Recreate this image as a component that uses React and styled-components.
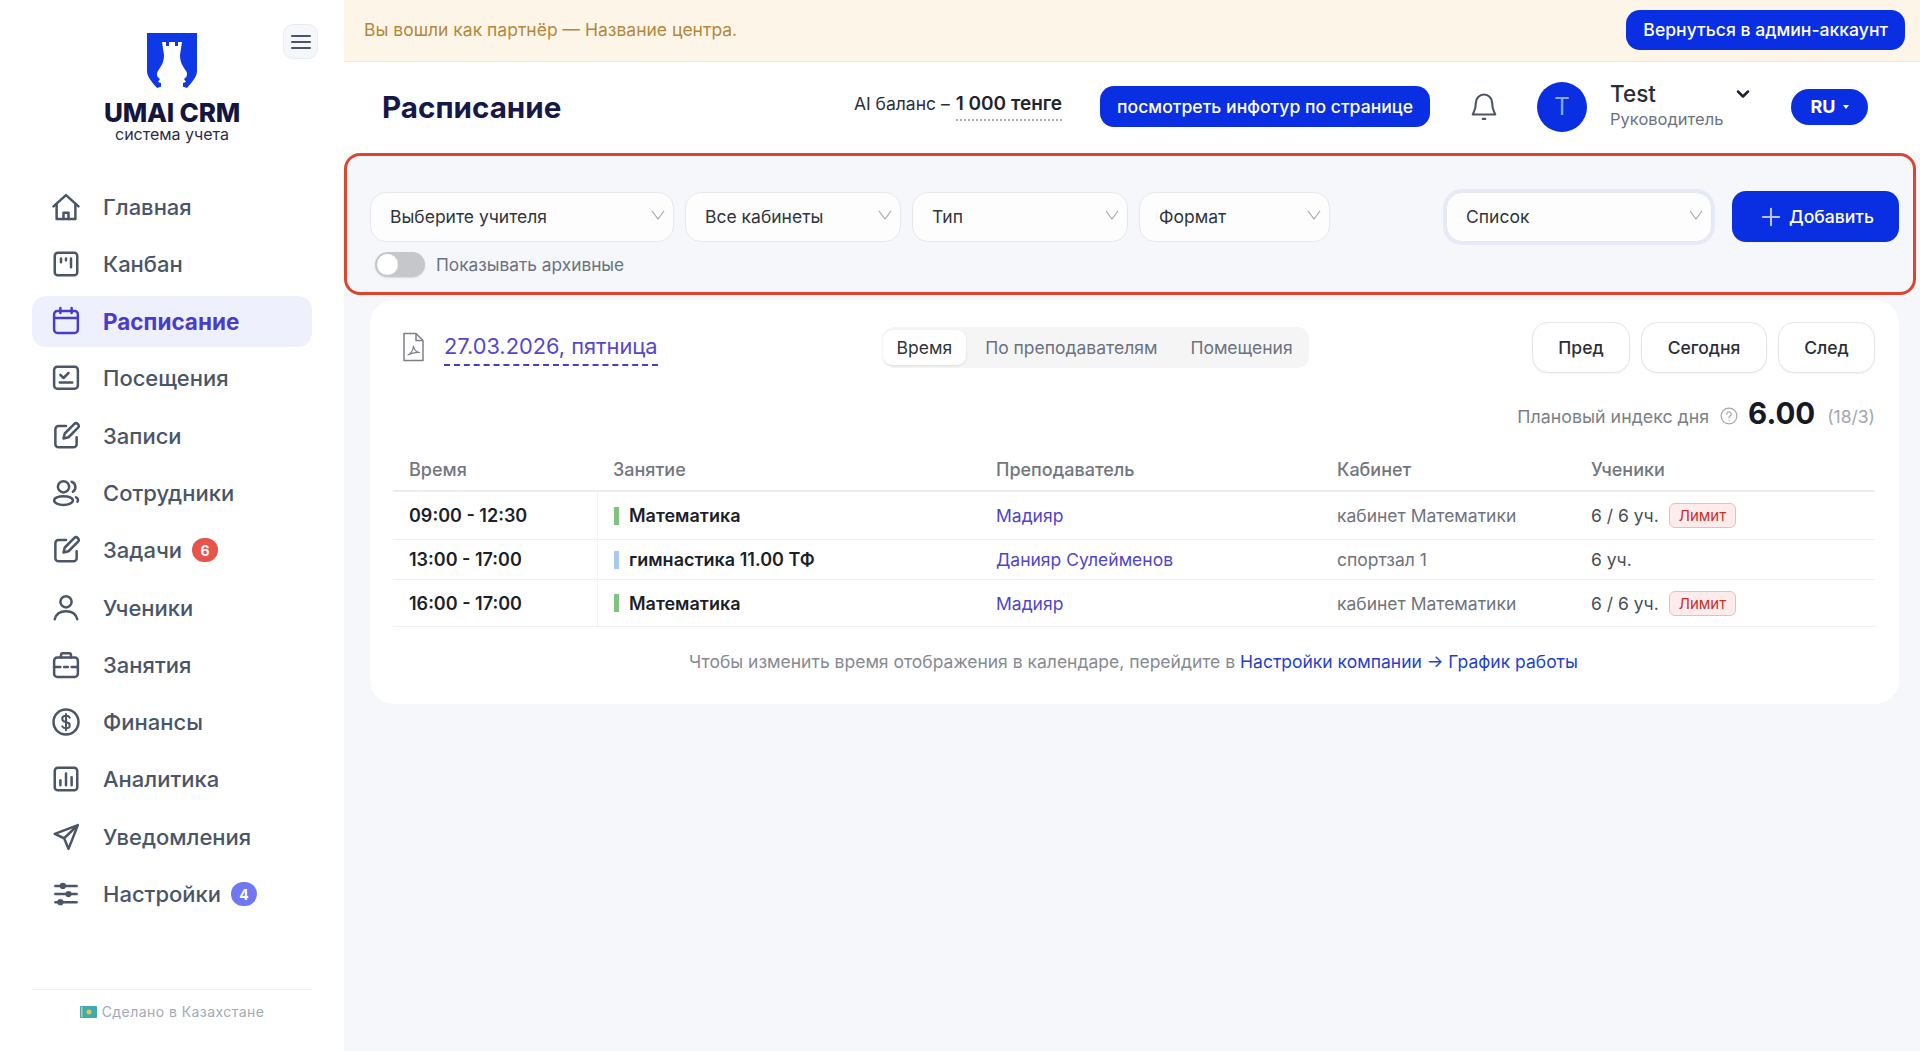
import React from "react";
import styled, { createGlobalStyle } from "styled-components";
import { ChevronDown, Plus } from "lucide-react";

const GlobalStyle = createGlobalStyle`
  * {
    box-sizing: border-box;
  }
  html,
  body {
    margin: 0;
    padding: 0;
    background: #f5f7fa;
    font-family: Inter, "Noto Sans", sans-serif;
  }
`;

const BLUE = "#0a2ee2";
const PURPLE = "#4a3cc8";

const Page = styled.div`
  display: flex;
  min-height: 100vh;
  height: 1051px;
  overflow: hidden;
`;

const Sidebar = styled.aside`
  position: relative;
  flex: 0 0 344px;
  display: flex;
  flex-direction: column;
  padding: 0 32px 0 32px;
  background: #fff;
`;

const LogoBlock = styled.div`
  display: flex;
  flex-direction: column;
  align-items: center;
  width: 280px;
  height: 181px;
  padding-top: 33px;
`;

const LogoName = styled.div`
  margin-top: 12px;
  font-size: 26px;
  line-height: 26px;
  font-weight: 800;
  letter-spacing: -0.2px;
  color: #14163f;
`;

const LogoSub = styled.div`
  font-size: 16px;
  line-height: 16px;
  color: #2b2d4a;
`;

const MenuButton = styled.button`
  position: absolute;
  top: 24px;
  left: 283px;
  display: flex;
  align-items: center;
  justify-content: center;
  width: 35px;
  height: 35px;
  padding: 0;
  border: 1px solid #e8ebf0;
  border-radius: 10px;
  background: #f6f7fa;
  color: #4a5568;
`;

const Nav = styled.nav`
  display: flex;
  flex-direction: column;
  gap: 6.3px;
`;

const NavItem = styled.div`
  display: flex;
  align-items: center;
  gap: 10px;
  height: 51px;
  padding-left: 19px;
  border-radius: 14px;
  font-size: ${(p) => (p.$active ? 22.5 : 22)}px;
  font-weight: ${(p) => (p.$active ? 700 : 500)};
  color: ${(p) => (p.$active ? PURPLE : "#4a5568")};
  background: ${(p) => (p.$active ? "#eef1fd" : "transparent")};

  svg {
    flex: none;
    margin-right: 12px;
  }
`;

const NavBadge = styled.span`
  display: flex;
  align-items: center;
  justify-content: center;
  width: 26px;
  height: 24px;
  border-radius: 12px;
  font-size: 14px;
  font-weight: 700;
  color: #fff;
  background: ${(p) => p.$color};
`;

const SideFooter = styled.div`
  display: flex;
  align-items: center;
  justify-content: center;
  gap: 5px;
  margin-top: auto;
  height: 62px;
  padding-bottom: 18px;
  border-top: 1px solid #eef0f3;
  font-size: 14px;
  letter-spacing: 0.45px;
  color: #a3a9b5;
`;

const Main = styled.main`
  flex: 1;
  min-width: 0;
  display: flex;
  flex-direction: column;
`;

const Banner = styled.div`
  display: flex;
  align-items: center;
  justify-content: space-between;
  height: 62px;
  padding: 0 15px 2px 20px;
  border-bottom: 1px solid #f7e9d2;
  background: #fdf6e8;
  font-size: 17.5px;
  color: #b5863c;
`;

const PrimaryButton = styled.button`
  height: ${(p) => p.$h}px;
  padding: 0 ${(p) => p.$px}px;
  border: none;
  border-radius: 14px;
  background: ${BLUE};
  color: #fff;
  font-family: inherit;
  font-size: 17.6px;
  font-weight: 500;
  white-space: nowrap;
`;

const Header = styled.header`
  display: flex;
  align-items: center;
  height: 91px;
  padding: 0 52px 2px 38px;
  background: #fff;
`;

const PageTitle = styled.h1`
  flex: 1;
  margin: 0;
  font-size: 29.6px;
  font-weight: 700;
  color: #17184a;
`;

const Balance = styled.div`
  display: flex;
  align-items: baseline;
  gap: 6px;
  margin-right: 38px;
  font-size: 17.5px;
  color: #2b2f3c;
`;

const BalanceValue = styled.span`
  padding-bottom: 4px;
  border-bottom: 2px dotted #a9adb6;
  font-size: 19px;
  font-weight: 600;
  color: #22242f;
`;

const BellWrap = styled.div`
  display: flex;
  margin: 0 38px 0 39px;
  color: #4a5568;
`;

const Avatar = styled.div`
  display: flex;
  align-items: center;
  justify-content: center;
  width: 50px;
  height: 50px;
  border-radius: 50%;
  background: ${BLUE};
  color: #8ea5f5;
  font-size: 24px;
`;

const UserInfo = styled.div`
  width: 123px;
  margin-left: 23px;
`;

const UserName = styled.div`
  margin-top: -5px;
  font-size: 22.5px;
  line-height: 28px;
  font-weight: 500;
  color: #2a2d37;
`;

const UserRole = styled.div`
  margin-top: 1px;
  font-size: 16.5px;
  line-height: 20px;
  color: #6b7280;
`;

const UserChevron = styled.div`
  display: flex;
  margin: -26px 38px 0 0;
  color: #1f2430;
`;

const LangButton = styled.div`
  display: flex;
  align-items: center;
  justify-content: center;
  gap: 7px;
  width: 77px;
  height: 36px;
  border-radius: 18px;
  background: ${BLUE};
  color: #fff;
  font-size: 18px;
  font-weight: 700;

  &::after {
    content: "";
    border-left: 3px solid transparent;
    border-right: 3px solid transparent;
    border-top: 4px solid #fff;
  }
`;

const FilterBar = styled.section`
  display: flex;
  flex-direction: column;
  gap: 10px;
  height: 142px;
  margin-right: 4px;
  padding: 35px 14px 0 23px;
  border: 3px solid #dc4630;
  border-radius: 16px;
`;

const FilterRow = styled.div`
  display: flex;
  align-items: center;
  gap: 11px;
`;

const SelectBox = styled.div`
  display: flex;
  align-items: center;
  justify-content: space-between;
  width: ${(p) => p.$w}px;
  height: 50px;
  padding: 0 6px 0 19px;
  border: 1px solid #e6e8ec;
  border-radius: 16px;
  background: #fdfdfd;
  box-shadow: ${(p) => (p.$focus ? "0 0 0 3px #e6e9f7" : "none")};
  font-size: 17.5px;
  color: #30343d;

  svg {
    color: #a9aeb6;
  }
`;

const Spacer = styled.div`
  flex: 1;
`;

const AddButton = styled.button`
  display: flex;
  align-items: center;
  justify-content: center;
  gap: 4px;
  width: 167px;
  height: 51px;
  margin-left: 9px;
  border: none;
  border-radius: 14px;
  background: ${BLUE};
  color: #fff;
  font-family: inherit;
  font-size: 17.6px;
  font-weight: 500;

  svg {
    color: #b7c3f8;
  }
`;

const ToggleRow = styled.div`
  display: flex;
  align-items: center;
  gap: 11px;
  padding-left: 5px;
  font-size: 17.3px;
  color: #6b7280;
`;

const Toggle = styled.div`
  display: flex;
  align-items: center;
  width: 50px;
  height: 25px;
  padding: 2px;
  border-radius: 13px;
  background: #c5c7cb;
  box-shadow: 0 1px 2px rgba(0, 0, 0, 0.12);

  &::before {
    content: "";
    width: 21px;
    height: 21px;
    border-radius: 50%;
    background: #fff;
  }
`;

const Card = styled.section`
  height: 404px;
  margin: 5px 21px 0 26px;
  padding: 22px 24px 0 23px;
  border-radius: 24px;
  background: #fff;
`;

const CardTop = styled.div`
  display: flex;
  align-items: center;
  height: 50px;
`;

const PdfWrap = styled.div`
  display: flex;
  margin: 0 19px 0 8px;
  color: #7d8087;
`;

const DateLink = styled.span`
  padding-bottom: 0;
  border-bottom: 2px dashed ${PURPLE};
  font-size: 21.8px;
  line-height: 36px;
  color: #5547cf;
`;

const Tabs = styled.div`
  display: flex;
  align-items: center;
  height: 41px;
  margin-left: 225px;
  padding: 0 16px 0 0;
  border-radius: 12px;
  background: #f5f5f6;
  font-size: 17.5px;
  color: #6b7280;
`;

const Tab = styled.div`
  display: flex;
  align-items: center;
  height: 35px;
  padding: 0 ${(p) => (p.$active ? 14 : 0)}px;
  margin-left: ${(p) => p.$ml}px;
  border-radius: 9px;
  background: ${(p) => (p.$active ? "#fff" : "transparent")};
  box-shadow: ${(p) => (p.$active ? "0 1px 3px rgba(0,0,0,.1)" : "none")};
  color: ${(p) => (p.$active ? "#2f323b" : "#6b7280")};
`;

const NavButtons = styled.div`
  display: flex;
  gap: 11px;
  margin-left: auto;
`;

const GhostButton = styled.button`
  width: ${(p) => p.$w}px;
  height: 51px;
  padding: 0;
  border: 1px solid #e3e5e9;
  border-radius: 16px;
  background: #fff;
  box-shadow: 0 1px 2px rgba(0, 0, 0, 0.05);
  color: #2b2e37;
  font-family: inherit;
  font-size: 17.5px;
  font-weight: 500;
`;

const IndexRow = styled.div`
  display: flex;
  align-items: center;
  justify-content: flex-end;
  height: 40px;
  margin-top: 24px;
  font-size: 17.8px;
  color: #7b7f88;

  svg {
    margin: 0 10px 0 11px;
    color: #a3a7ae;
  }
`;

const IndexValue = styled.span`
  margin: -6px 12px 0 0;
  font-size: 29.5px;
  font-weight: 700;
  color: #171a26;
`;

const IndexNote = styled.span`
  font-size: 17.5px;
  color: #a3a7ae;
`;

const Grid = styled.div`
  display: grid;
  grid-template-columns: 204px 383px 341px 254px 1fr;
  margin-top: 12px;
`;

const HeadCell = styled.div`
  display: flex;
  align-items: center;
  height: 44px;
  padding-left: 16px;
  border-bottom: 2px solid #ebedf0;
  font-size: 18px;
  font-weight: 500;
  color: #72767f;
`;

const Cell = styled.div`
  display: flex;
  align-items: center;
  height: ${(p) => p.$h}px;
  padding-left: 16px;
  border-bottom: 1px solid #eef0f2;
  border-left: ${(p) => (p.$divider ? "1px solid #f1f2f4" : "none")};
  font-size: ${(p) => (p.$strong ? 18 : 17.5)}px;
  font-weight: ${(p) => (p.$strong ? 600 : 400)};
  color: ${(p) => p.$color || "#6f737c"};
`;

const LessonBar = styled.span`
  width: 5px;
  height: 18px;
  margin-right: 10px;
  background: ${(p) => p.$color};
`;

const LimitTag = styled.span`
  display: flex;
  align-items: center;
  height: 25px;
  margin-left: 10px;
  padding: 0 9px;
  border: 1px solid #f5b8b4;
  border-radius: 6px;
  background: #fdeceb;
  font-size: 15px;
  color: #c9302c;
`;

const Hint = styled.div`
  margin-top: 24px;
  padding-right: 1px;
  text-align: center;
  font-size: 17.5px;
  color: #868a93;
`;

const HintLink = styled.span`
  color: #1f3fd1;
`;

function Icon({ children }) {
  return (
    <svg
      width="30"
      height="30"
      viewBox="0 0 24 24"
      fill="none"
      stroke="currentColor"
      strokeWidth="2"
      strokeLinecap="round"
      strokeLinejoin="round"
    >
      {children}
    </svg>
  );
}

const navItems = [
  {
    label: "Главная",
    icon: (
      <>
        <path d="M2 11.5 12 2.5l10 9" />
        <path d="M4.5 9.5V21.5h15V9.5" />
        <path d="M10 21.5v-5h4v5" />
      </>
    ),
  },
  {
    label: "Канбан",
    icon: (
      <>
        <rect x="3" y="3" width="18" height="18" rx="2.5" />
        <path d="M8 7.5v3M12 7.5v1.5M16 7.5v7" />
      </>
    ),
  },
  {
    label: "Расписание",
    active: true,
    icon: (
      <>
        <rect x="2.5" y="4" width="19" height="17.5" rx="2.5" />
        <path d="M2.5 9.5h19M7.5 1.5v4M16.5 1.5v4" />
      </>
    ),
  },
  {
    label: "Посещения",
    icon: (
      <>
        <rect x="2.5" y="3" width="19" height="17.5" rx="2.5" />
        <path d="m7.5 9.5 2.5 2.500 4-4M7 15.500h10" />
      </>
    ),
  },
  {
    label: "Записи",
    icon: (
      <>
        <path d="M12 4H6a2.5 2.5 0 0 0-2.5 2.5v12A2.5 2.5 0 0 0 6 21h12a2.5 2.5 0 0 0 2.5-2.5V13" />
        <path d="M18.5 2.5a2 2 0 0 1 3 3L14 13l-4 1 1-4z" />
      </>
    ),
  },
  {
    label: "Сотрудники",
    icon: (
      <>
        <circle cx="10" cy="7" r="4.5" />
        <ellipse cx="10" cy="18" rx="7.5" ry="3.5" />
        <path d="M16.5 3a4.5 4.5 0 0 1 1 8M20 15.5c1.5.7 2 2 1.2 3.5" />
      </>
    ),
  },
  {
    label: "Задачи",
    badge: { value: 6, color: "#e8534b" },
    icon: (
      <>
        <path d="M12 4H6a2.5 2.5 0 0 0-2.5 2.5v12A2.5 2.5 0 0 0 6 21h12a2.5 2.5 0 0 0 2.5-2.5V13" />
        <path d="M18.5 2.5a2 2 0 0 1 3 3L14 13l-4 1 1-4z" />
      </>
    ),
  },
  {
    label: "Ученики",
    icon: (
      <>
        <circle cx="12" cy="7" r="4.5" />
        <path d="M3 21c1-4.5 4.5-6.5 9-6.5s8 2 9 6.5" />
      </>
    ),
  },
  {
    label: "Занятия",
    icon: (
      <>
        <rect x="2.5" y="6" width="19" height="15.5" rx="2.5" />
        <path d="M8 6V4a1.5 1.5 0 0 1 1.5-1.5h5A1.5 1.5 0 0 1 16 4v2" />
        <path d="M2.5 13.5h5M10.5 13.5h3M16.5 13.5h5" />
      </>
    ),
  },
  {
    label: "Финансы",
    icon: (
      <>
        <circle cx="12" cy="12" r="10" />
        <path d="M15 8.500c-.5-1-1.600-1.500-3-1.500-1.800 0-3 1-3 2.500 0 3.400 6 1.600 6 5 0 1.500-1.200 2.500-3 2.500-1.400 0-2.500-.5-3-1.500M12 5.500v13" strokeWidth="1.600" />
      </>
    ),
  },
  {
    label: "Аналитика",
    icon: (
      <>
        <rect x="3" y="3" width="18" height="18" rx="2.5" />
        <path d="M7.500 17v-4M12 17V7.500M16.500 17v-6.500" />
      </>
    ),
  },
  {
    label: "Уведомления",
    icon: <path d="M21.500 2.500 3 9.500l7.500 3.500 3.500 8.500zM10.500 13l11-10.500" />,
  },
  {
    label: "Настройки",
    badge: { value: 4, color: "#7077f2" },
    icon: (
      <>
        <path d="M3.500 5.500h17M3.500 12h17M3.500 18.500h17" />
        <circle cx="9.500" cy="5.500" r="1.500" fill="currentColor" />
        <circle cx="14" cy="12" r="1.500" fill="currentColor" />
        <circle cx="7.500" cy="18.500" r="1.500" fill="currentColor" />
      </>
    ),
  },
];

const rows = [
  {
    time: "09:00 - 12:30",
    lesson: "Математика",
    bar: "#7fc37f",
    teacher: "Мадияр",
    room: "кабинет Математики",
    students: "6 / 6 уч.",
    limit: true,
    height: 48,
  },
  {
    time: "13:00 - 17:00",
    lesson: "гимнастика 11.00 ТФ",
    bar: "#a8c8f5",
    teacher: "Данияр Сулейменов",
    room: "спортзал 1",
    students: "6 уч.",
    height: 40,
  },
  {
    time: "16:00 - 17:00",
    lesson: "Математика",
    bar: "#7fc37f",
    teacher: "Мадияр",
    room: "кабинет Математики",
    students: "6 / 6 уч.",
    limit: true,
    height: 47,
  },
];

function LogoMark() {
  return (
    <svg width="50" height="55" viewBox="0 0 50 55">
      <path d="M0 0H50V38C50 44 45 49 40 55L25 50L10 55C5 49 0 44 0 38Z" fill="#0f39e6" />
      <path
        d="M15 9h4v4h3V9h6v4h3V9h4L33 22C33 30 36 33 39 38C41 41 40 44 37 46L39 49L36 50V55H14V50L11 49L13 46C10 44 9 41 11 38C14 33 17 30 17 22Z"
        fill="#fff"
      />
    </svg>
  );
}

function KzFlag() {
  return (
    <svg width="17" height="12" viewBox="0 0 17 12">
      <rect width="17" height="12" rx="1" fill="#3fa9b5" />
      <circle cx="9" cy="6" r="2.500" fill="#e5c94a" />
      <rect x="1" y="1" width="1.500" height="10" fill="#e5c94a" />
    </svg>
  );
}

function SelectChevron() {
  return (
    <svg width="18" height="18" viewBox="0 0 18 18" fill="none" stroke="currentColor" strokeWidth="1.300">
      <path d="M3 5l6 10 6-10" transform="translate(0 -1) scale(1 .8)" />
    </svg>
  );
}

export default function App() {
  return (
    <>
      <GlobalStyle />
      <Page>
        <Sidebar>
          <LogoBlock>
            <LogoMark />
            <LogoName>UMAI CRM</LogoName>
            <LogoSub>система учета</LogoSub>
          </LogoBlock>
          <MenuButton aria-label="menu">
            <svg width="24" height="24" viewBox="0 0 24 24" fill="none" stroke="currentColor" strokeWidth="2" strokeLinecap="round">
              <path d="M3 6h18M3 12h18M3 18h18" />
            </svg>
          </MenuButton>
          <Nav>
            {navItems.map((item) => (
              <NavItem key={item.label} $active={item.active}>
                <Icon>{item.icon}</Icon>
                {item.label}
                {item.badge && <NavBadge $color={item.badge.color}>{item.badge.value}</NavBadge>}
              </NavItem>
            ))}
          </Nav>
          <SideFooter>
            <KzFlag />
            Сделано в Казахстане
          </SideFooter>
        </Sidebar>
        <Main>
          <Banner>
            Вы вошли как партнёр — Название центра.
            <PrimaryButton $h={40} $px={17}>Вернуться в админ-аккаунт</PrimaryButton>
          </Banner>
          <Header>
            <PageTitle>Расписание</PageTitle>
            <Balance>
              AI баланс – <BalanceValue>1 000 тенге</BalanceValue>
            </Balance>
            <PrimaryButton $h={41} $px={17}>посмотреть инфотур по странице</PrimaryButton>
            <BellWrap>
              <svg width="30" height="30" viewBox="0 0 24 24" fill="none" stroke="currentColor" strokeWidth="1.700" strokeLinecap="round" strokeLinejoin="round">
                <path d="M12 2a6.500 6.500 0 0 0-6.500 6.500c0 6-2 8-2.500 9.500h18c-.5-1.500-2.500-3.500-2.500-9.500A6.500 6.500 0 0 0 12 2z" />
                <path d="M11 21.500h2" />
              </svg>
            </BellWrap>
            <Avatar>T</Avatar>
            <UserInfo>
              <UserName>Test</UserName>
              <UserRole>Руководитель</UserRole>
            </UserInfo>
            <UserChevron>
              <ChevronDown size={20} strokeWidth={3} />
            </UserChevron>
            <LangButton>RU</LangButton>
          </Header>
          <FilterBar>
            <FilterRow>
              <SelectBox $w={304}>Выберите учителя<SelectChevron /></SelectBox>
              <SelectBox $w={216}>Все кабинеты<SelectChevron /></SelectBox>
              <SelectBox $w={216}>Тип<SelectChevron /></SelectBox>
              <SelectBox $w={191}>Формат<SelectChevron /></SelectBox>
              <Spacer />
              <SelectBox $w={266} $focus>Список<SelectChevron /></SelectBox>
              <AddButton>
                <Plus size={28} strokeWidth={1.8} />
                Добавить
              </AddButton>
            </FilterRow>
            <ToggleRow>
              <Toggle />
              Показывать архивные
            </ToggleRow>
          </FilterBar>
          <Card>
            <CardTop>
              <PdfWrap>
                <svg width="24" height="30" viewBox="0 0 24 30" fill="none" stroke="currentColor" strokeWidth="1.500" strokeLinejoin="round">
                  <path d="M3 1.500h12l7 7v20H3z" />
                  <path d="M15 1.500v7h7" />
                  <path d="M7 23c3-1.500 5-5 5.500-9 .5 4 2.500 6 6 6.500-4-.5-8 .5-11.500 2.500z" strokeWidth="1.200" />
                </svg>
              </PdfWrap>
              <DateLink>27.03.2026, пятница</DateLink>
              <Tabs>
                <Tab $active>Время</Tab>
                <Tab $ml={19}>По преподавателям</Tab>
                <Tab $ml={33}>Помещения</Tab>
              </Tabs>
              <NavButtons>
                <GhostButton $w={98}>Пред</GhostButton>
                <GhostButton $w={126}>Сегодня</GhostButton>
                <GhostButton $w={97}>След</GhostButton>
              </NavButtons>
            </CardTop>
            <IndexRow>
              Плановый индекс дня
              <svg width="18" height="18" viewBox="0 0 24 24" fill="none" stroke="currentColor" strokeWidth="1.600" strokeLinecap="round">
                <circle cx="12" cy="12" r="10.500" />
                <path d="M9 9.500a3 3 0 1 1 4.500 2.600c-1 .6-1.500 1.200-1.500 2.400M12 18v.2" />
              </svg>
              <IndexValue>6.00</IndexValue>
              <IndexNote>(18/3)</IndexNote>
            </IndexRow>
            <Grid>
              <HeadCell>Время</HeadCell>
              <HeadCell>Занятие</HeadCell>
              <HeadCell>Преподаватель</HeadCell>
              <HeadCell>Кабинет</HeadCell>
              <HeadCell>Ученики</HeadCell>
              {rows.map((row) => (
                <React.Fragment key={row.time}>
                  <Cell $h={row.height} $strong $color="#1c1f2a">{row.time}</Cell>
                  <Cell $h={row.height} $divider $strong $color="#1c1f2a">
                    <LessonBar $color={row.bar} />
                    {row.lesson}
                  </Cell>
                  <Cell $h={row.height} $color="#4f45c9">{row.teacher}</Cell>
                  <Cell $h={row.height}>{row.room}</Cell>
                  <Cell $h={row.height} $color="#4a4e58">
                    {row.students}
                    {row.limit && <LimitTag>Лимит</LimitTag>}
                  </Cell>
                </React.Fragment>
              ))}
            </Grid>
            <Hint>
              Чтобы изменить время отображения в календаре, перейдите в{" "}
              <HintLink>Настройки компании → График работы</HintLink>
            </Hint>
          </Card>
        </Main>
      </Page>
    </>
  );
}
